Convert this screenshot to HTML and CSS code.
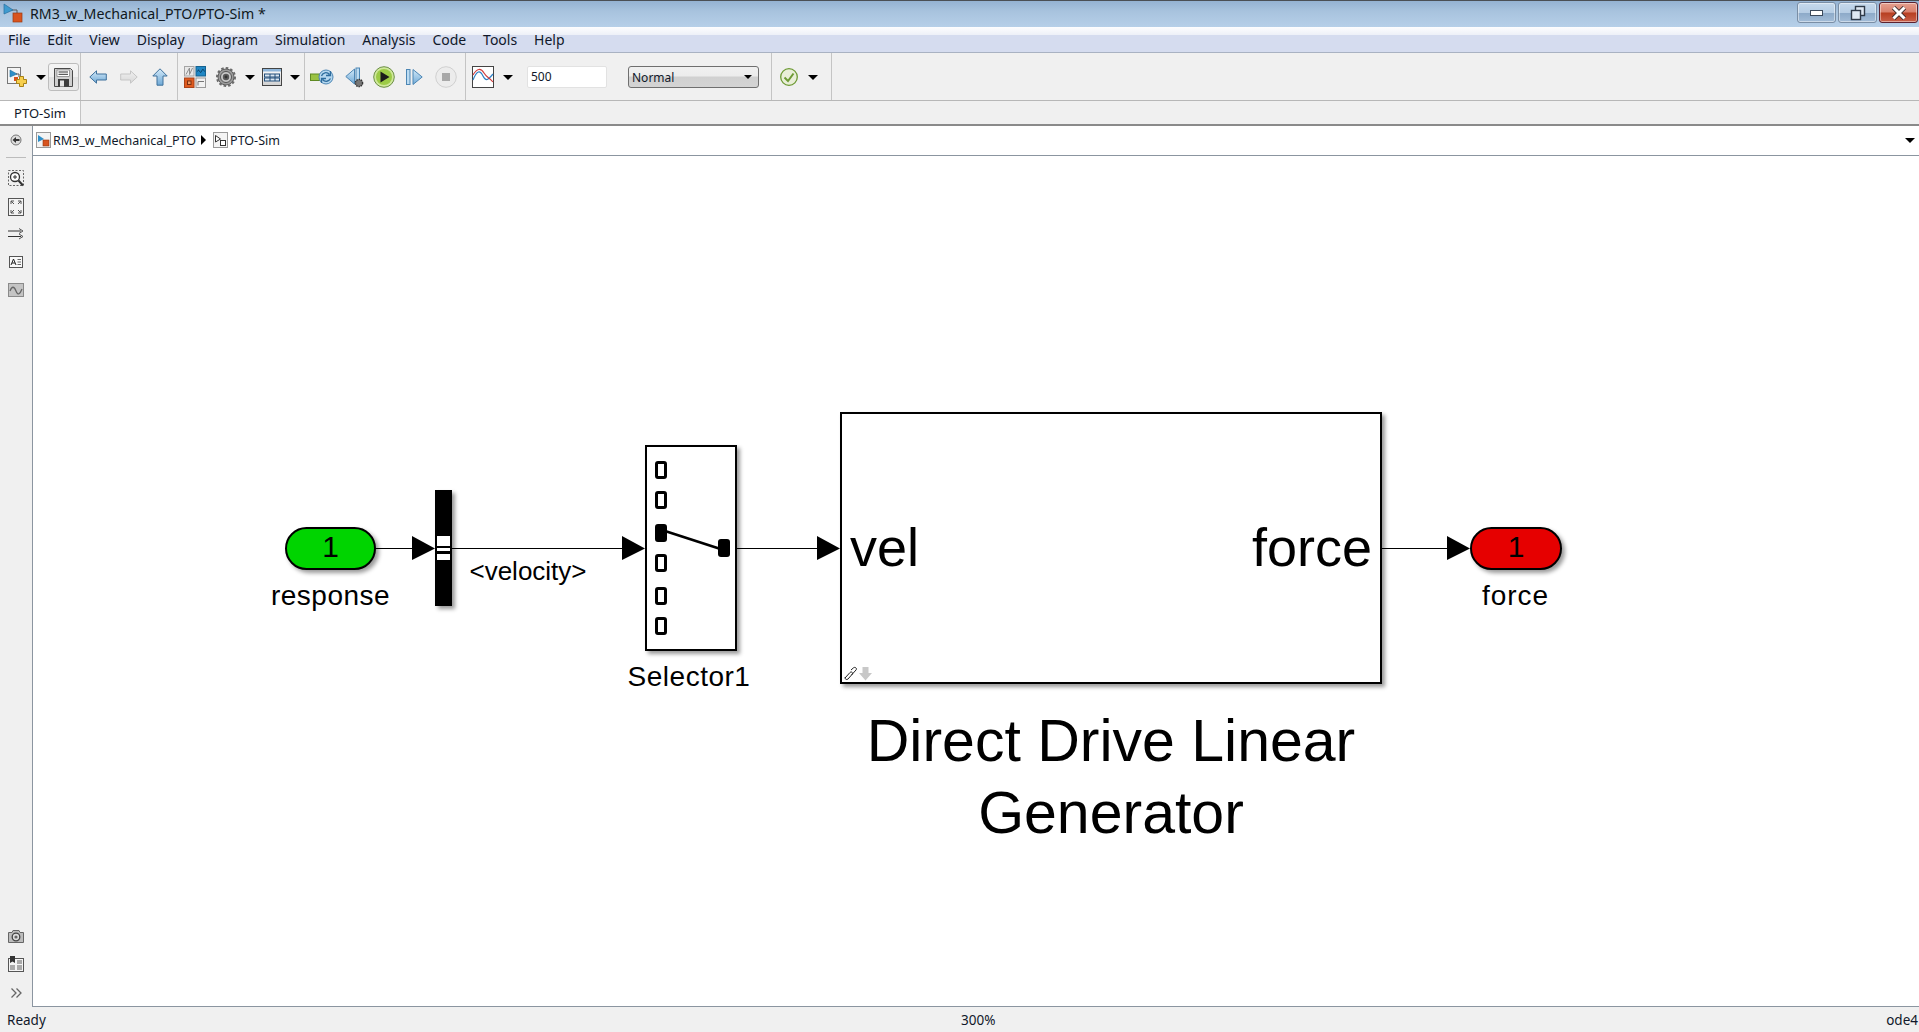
FILE: index.html
```html
<!DOCTYPE html>
<html lang="en">
<head>
    <meta charset="UTF-8">
    <title>RM3_w_Mechanical_PTO/PTO-Sim *</title>
    <link rel="stylesheet" href="styles.css">
</head>
<body>

<div class="titlebar">
    <svg class="app-icon" width="20" height="20" viewBox="0 0 20 20">
        <path d="M7 7H14V12" fill="none" stroke="#555" stroke-width="1"/>
        <path d="M1 1L10 7L1 11Z" fill="#3f9bd0" stroke="#2a6f9e" stroke-width=".7"/>
        <rect x="10" y="10" width="9" height="9" fill="#d9541e" stroke="#9a3a12" stroke-width=".7"/>
    </svg>
    <span class="title-text">RM3_w_Mechanical_PTO/PTO-Sim *</span>
    <div class="win-buttons">
        <div class="win-btn">
            <svg width="14" height="8" viewBox="0 0 14 8"><rect x=".5" y="1.500" width="12" height="5" fill="#fff" stroke="#3c4a5c"/></svg>
        </div>
        <div class="win-btn">
            <svg width="16" height="16" viewBox="0 0 16 16"><rect x="5.500" y="1.500" width="9" height="9" fill="#dfe8f2" stroke="#2f3a48" stroke-width="1.400"/><rect x="1.500" y="5.500" width="9" height="9" fill="#dfe8f2" stroke="#2f3a48" stroke-width="1.400"/></svg>
        </div>
        <div class="win-btn win-close">
            <svg width="16" height="14" viewBox="0 0 16 14"><path d="M2.500 1.500L13.500 12.500M13.500 1.500L2.500 12.500" stroke="#3a2a2a" stroke-width="4.600"/><path d="M2.500 1.500L13.500 12.500M13.500 1.500L2.500 12.500" stroke="#fff" stroke-width="3"/></svg>
        </div>
    </div>
</div>

<div class="menubar">
    <span>File</span>
    <span>Edit</span>
    <span>View</span>
    <span>Display</span>
    <span>Diagram</span>
    <span>Simulation</span>
    <span>Analysis</span>
    <span>Code</span>
    <span>Tools</span>
    <span>Help</span>
</div>

<div class="toolbar">
    <svg class="defs" width="0" height="0">
        <defs>
            <linearGradient id="blueArrow" x1="0" y1="0" x2="0" y2="1">
                <stop offset="0" stop-color="#d3e9f8"/>
                <stop offset="1" stop-color="#6fa9d6"/>
            </linearGradient>
            <linearGradient id="greyArrow" x1="0" y1="0" x2="0" y2="1">
                <stop offset="0" stop-color="#f0f0f0"/>
                <stop offset="1" stop-color="#d8d8d8"/>
            </linearGradient>
            <linearGradient id="tableFill" x1="0" y1="0" x2="0" y2="1">
                <stop offset="0" stop-color="#fff"/>
                <stop offset="1" stop-color="#cfcfcf"/>
            </linearGradient>
        </defs>
    </svg>
    <div class="tool-group group-file">
        <svg width="20" height="20" viewBox="0 0 20 20">
            <rect x=".5" y=".5" width="13" height="16" fill="#f4f4f4" stroke="#777"/>
            <path d="M3 3L10 7L3 10Z" fill="#2f8fc8" stroke="#1f6e9f" stroke-width=".6"/>
            <path d="M9 7H12V10" fill="none" stroke="#555"/>
            <rect x="7" y="10" width="4" height="4" fill="#d9541e"/>
            <path d="M12.500 9.500H16.500V12.500H19.500V16.500H16.500V19.500H12.500V16.500H9.500V12.500H12.500Z" fill="#f7cf4d" stroke="#a98216"/>
        </svg>
        <i class="caret caret-file"></i>
        <div class="save-btn">
            <svg width="19" height="19" viewBox="0 0 19 19">
                <path d="M.5 .5H16.500L18.500 2.500V18.500H.5Z" fill="#cfcfcf" stroke="#4a4a4a"/>
                <rect x="3" y="2" width="12.500" height="6.500" fill="#fff" stroke="#666" stroke-width=".6"/>
                <path d="M4.500 4H14M4.500 6.300H14" stroke="#333"/>
                <rect x="4" y="11" width="11" height="7.500" fill="#3c3c3c"/>
                <rect x="6" y="12.500" width="4" height="6" fill="#e4e4e4"/>
            </svg>
        </div>
    </div>
    <div class="tool-group group-nav">
        <svg width="18" height="14" viewBox="0 0 18 14"><path d="M.8 7L7.500 .8V4H17.300V10H7.500V13.200Z" fill="url(#blueArrow)" stroke="#3f719c"/></svg>
        <svg width="18" height="14" viewBox="0 0 18 14"><path d="M17.200 7L10.500 .8V4H.7V10H10.500V13.200Z" fill="url(#greyArrow)" stroke="#c6c6c6"/></svg>
        <svg class="nav-up" width="16" height="18" viewBox="0 0 16 18"><path d="M8 .8L15.200 8H11V17.200H5V8H.8Z" fill="url(#blueArrow)" stroke="#3f719c"/></svg>
    </div>
    <div class="tool-group group-model">
        <svg width="22" height="22" viewBox="0 0 22 22">
            <rect x=".5" y=".5" width="9.500" height="9.500" fill="#e8e8e8" stroke="#a5a5a5"/>
            <path d="M2 8.500L5.500 2V8.500L8.500 2" stroke="#8d8d8d" fill="none"/>
            <rect x="12" y=".5" width="9.500" height="9.500" fill="#1f86c4" stroke="#16628f"/>
            <path d="M13.500 5.500C15 1 16 9 17.500 5.500S19 3 20.500 5.500" stroke="#0b3a5c" fill="none"/>
            <rect x=".5" y="12" width="9.500" height="9.500" fill="#df5b1f" stroke="#a9431a"/>
            <rect x="3.500" y="15" width="3.500" height="3.500" fill="#ee9a63" stroke="#7a2f10"/>
            <rect x="12" y="12" width="9.500" height="9.500" fill="#f2f2f2" stroke="#9a9a9a"/>
            <path d="M14 19.500V15.500H20" stroke="#777" fill="none"/>
        </svg>
        <svg class="gear" width="20" height="20" viewBox="0 0 20 20">
            <circle cx="10" cy="10" r="8" fill="#9b9b9b" stroke="#5d5d5d"/>
            <circle cx="10" cy="10" r="9" fill="none" stroke="#6a6a6a" stroke-width="2" stroke-dasharray="2.600 2.050"/>
            <circle cx="10" cy="10" r="5.500" fill="#c8c8c8" stroke="#555"/>
            <circle cx="10" cy="10" r="3.200" fill="#5a5a5a"/>
            <circle cx="10" cy="10" r="1.400" fill="#333"/>
        </svg>
        <i class="caret caret-gear"></i>
        <svg width="20" height="18" viewBox="0 0 20 18">
            <rect x=".5" y=".5" width="19" height="17" fill="url(#tableFill)" stroke="#444"/>
            <rect x="1" y="1" width="18" height="2.500" fill="#8fb6da"/>
            <rect x="2.500" y="6" width="15" height="3" fill="#d9e5f0" stroke="#24507c"/>
            <rect x="2.500" y="10" width="15" height="3" fill="#d9e5f0" stroke="#24507c"/>
            <path d="M8 6V13M13 6V13" stroke="#24507c"/>
        </svg>
        <i class="caret caret-config"></i>
    </div>
    <div class="tool-group group-run">
        <svg width="25" height="18" viewBox="0 0 25 18">
            <rect x=".5" y="6" width="9" height="6.500" fill="#9ac243" stroke="#5f8a22"/>
            <circle cx="16" cy="9" r="7" fill="#b5d7ef" stroke="#4c86b4"/>
            <path d="M11.500 8C12.500 4.500 17 3.500 19.500 6.500M20.500 3V7.500H16M20.500 10.500C19 13.500 15 14.500 12.500 11.500M11.500 15V10.500H16" fill="none" stroke="#2e6d9e" stroke-width="1.300"/>
        </svg>
        <svg width="19" height="22" viewBox="0 0 19 22">
            <path d="M9.500 3L.8 10.500L9.500 18Z" fill="url(#blueArrow)" stroke="#4c86b4"/>
            <rect x="11" y="2" width="3.500" height="14" fill="#bcdcf2" stroke="#4c86b4"/>
            <circle cx="14" cy="17" r="3.600" fill="#777" stroke="#333" stroke-width="1.400" stroke-dasharray="1.500 .8"/>
        </svg>
        <svg class="play" width="22" height="22" viewBox="0 0 22 22">
            <circle cx="11" cy="11" r="10.300" fill="#cfe89a" stroke="#6c8f47"/>
            <circle cx="11" cy="11" r="8" fill="#9ccb46"/>
            <path d="M7.500 5.500L16.500 11L7.500 16.500Z" fill="#1b1b1b"/>
        </svg>
        <svg class="step" width="17" height="18" viewBox="0 0 17 18">
            <rect x=".5" y="1.500" width="3.500" height="15" fill="#bcdcf2" stroke="#4c86b4"/>
            <path d="M7 1.500L16.200 9L7 16.500Z" fill="url(#blueArrow)" stroke="#4c86b4"/>
        </svg>
        <svg class="stop" width="22" height="22" viewBox="0 0 22 22">
            <circle cx="11" cy="11" r="10.300" fill="#ececec" stroke="#d0d0d0"/>
            <rect x="7" y="7" width="8" height="8" fill="#a8a8a8"/>
        </svg>
    </div>
    <div class="tool-group group-sim">
        <svg width="22" height="22" viewBox="0 0 22 22">
            <rect x=".5" y=".5" width="21" height="21" fill="#fff" stroke="#444"/>
            <path d="M1 14C5 4 8 4 11 10S16 14 21 8" fill="none" stroke="#2f7fc4" stroke-width="1.200"/>
            <path d="M1 9C5 2 9 2 12 7S17 11 21 16" fill="none" stroke="#d13b3b" stroke-width="1.200"/>
        </svg>
        <i class="caret caret-scope"></i>
        <div class="stop-time">500</div>
        <div class="mode-select">Normal<i class="caret caret-mode"></i></div>
    </div>
    <div class="tool-group group-check">
        <svg width="18" height="18" viewBox="0 0 18 18">
            <circle cx="9" cy="9" r="8.300" fill="#e9eed8" stroke="#6d9a34" stroke-width="1.300"/>
            <path d="M4.500 9.500L8 13L13.500 5.500" fill="none" stroke="#6d9a34" stroke-width="2"/>
        </svg>
        <i class="caret caret-check"></i>
    </div>
</div>

<div class="tabbar">
    <div class="tab">PTO-Sim</div>
</div>

<div class="workspace">
    <div class="sidebar">
        <svg class="side-back" width="12" height="12" viewBox="0 0 12 12">
            <circle cx="6" cy="6" r="5" fill="#ddd" stroke="#777"/>
            <path d="M2.500 6L6 3V5H9.500V7H6V9Z" fill="#333"/>
        </svg>
        <div class="side-sep"></div>
        <svg class="side-zoom" width="16" height="17" viewBox="0 0 16 17">
            <rect x=".5" y=".5" width="15" height="15" fill="none" stroke="#666" stroke-dasharray="2 1.500"/>
            <circle cx="7" cy="7" r="4.500" fill="#fff" stroke="#333" stroke-width="1.300"/>
            <path d="M5 7H9M7 5V9" stroke="#333"/>
            <path d="M10.500 10.500L15 15.500" stroke="#333" stroke-width="2"/>
        </svg>
        <svg class="side-fit" width="16" height="18" viewBox="0 0 16 18">
            <rect x=".5" y=".5" width="15" height="17" fill="#f3f3f3" stroke="#555"/>
            <path d="M3 6V3H6M10 3H13V6M13 12V15H10M6 15H3V12M3 3L6 6M13 3L10 6M13 15L10 12M3 15L6 12" fill="none" stroke="#555"/>
        </svg>
        <svg class="side-arrows" width="16" height="12" viewBox="0 0 16 12">
            <path d="M0 3H13M0 8.500H13" stroke="#333"/>
            <path d="M11 .5L15 3L11 5.500M11 6L15 8.500L11 11" fill="none" stroke="#555"/>
        </svg>
        <svg class="side-note" width="14" height="12" viewBox="0 0 14 12">
            <rect x=".5" y=".5" width="13" height="11" fill="#fafafa" stroke="#555"/>
            <path d="M2 9L4.500 3L7 9M3 7H6" fill="none" stroke="#222"/>
            <path d="M8.500 3.500H12M8.500 6H12M8.500 8.500H12" stroke="#666"/>
        </svg>
        <svg class="side-image" width="16" height="14" viewBox="0 0 16 14">
            <rect x=".5" y=".5" width="15" height="13" fill="#c4c4c4" stroke="#8a8a8a"/>
            <path d="M2 8C4 3 6 3 8 8S12 11 14 6" fill="none" stroke="#666" stroke-width="1.300"/>
        </svg>
        <svg class="side-camera" width="16" height="14" viewBox="0 0 16 14">
            <path d="M.5 3.500H4L5 1.500H11L12 3.500H15.500V13.500H.5Z" fill="#bcbcbc" stroke="#666"/>
            <circle cx="8" cy="8" r="3.800" fill="#ddd" stroke="#444" stroke-width="1.300"/>
            <circle cx="8" cy="8" r="1.600" fill="#666"/>
        </svg>
        <svg class="side-grid" width="16" height="16" viewBox="0 0 16 16">
            <rect x=".5" y="2.500" width="15" height="13" fill="#f4f4f4" stroke="#555"/>
            <rect x="2" y="9" width="5" height="5" fill="#aaa"/>
            <rect x="9" y="4" width="5" height="4" fill="#aaa"/>
            <rect x="9" y="9" width="5" height="5" fill="#aaa"/>
            <path d="M2 0H7V7L4.500 5.500L2 7Z" fill="#333"/>
        </svg>
        <svg class="side-more" width="11" height="10" viewBox="0 0 11 10">
            <path d="M.5 .5L5 5L.5 9.500M5.500 .5L10 5L5.500 9.500" fill="none" stroke="#666" stroke-width="1.300"/>
        </svg>
    </div>
    <div class="main">
        <div class="addressbar">
            <div class="crumb-icon">
                <svg width="13" height="13" viewBox="0 0 13 13">
                    <path d="M1 1L7 5L1 8Z" fill="#2f8fc8"/>
                    <rect x="6" y="6" width="6" height="6" fill="#d9541e" stroke="#8e3611" stroke-width=".6"/>
                </svg>
            </div>
            <span class="crumb">RM3_w_Mechanical_PTO</span>
            <i class="crumb-arrow"></i>
            <div class="crumb-icon">
                <svg width="13" height="13" viewBox="0 0 13 13">
                    <path d="M1.500 1.500L6.500 5L1.500 8Z" fill="#fff" stroke="#333"/>
                    <rect x="6.500" y="6.500" width="5" height="5" fill="#fff" stroke="#333"/>
                </svg>
            </div>
            <span class="crumb">PTO-Sim</span>
            <i class="caret caret-address"></i>
        </div>
        <div class="canvas">
            <svg class="wires" width="1886" height="850" viewBox="0 0 1886 850">
                <path d="M343 392.500H379M419 392.500H589M704 392.500H784M1348 392.500H1414" stroke="#000" stroke-width="1"/>
                <path d="M379 380L402 392.500L379 404ZM589 380L612 392.500L589 404ZM784 380L807 392.500L784 404ZM1414 380L1437 392.500L1414 404Z" fill="#000"/>
            </svg>

            <div class="port port-in">1</div>
            <div class="label label-response">response</div>

            <div class="mux">
                <div class="mux-slot mux-slot-a"></div>
                <div class="mux-slot mux-slot-b"></div>
                <div class="mux-slot mux-slot-c"></div>
            </div>
            <div class="label label-velocity">&lt;velocity&gt;</div>

            <div class="selector">
                <i class="sel-pin sel-pin-1"></i>
                <i class="sel-pin sel-pin-2"></i>
                <i class="sel-pin sel-pin-on"></i>
                <i class="sel-pin sel-pin-4"></i>
                <i class="sel-pin sel-pin-5"></i>
                <i class="sel-pin sel-pin-6"></i>
                <i class="sel-out"></i>
                <svg class="sel-arm" width="92" height="206" viewBox="0 0 92 206">
                    <path d="M20 86L74 103.500" stroke="#000" stroke-width="2.600"/>
                </svg>
            </div>
            <div class="label label-selector">Selector1</div>

            <div class="subsystem">
                <span class="sub-port">vel</span>
                <span class="sub-port">force</span>
                <svg class="sub-badge" width="30" height="16" viewBox="0 0 30 16">
                    <path d="M2 12L7 6.500C8.500 5 10.500 7 9 8.500L5 13C3.500 14.500 1 12.500 2.500 11M8 4L10.500 1.800C12 .5 14.500 2.500 13 4L8.500 9" fill="none" stroke="#222" stroke-width="1"/>
                    <path d="M19.500 1H25.500V7H29L22.500 14.500L16 7H19.500Z" fill="#c8c8c8"/>
                </svg>
            </div>
            <div class="label label-generator">Direct Drive Linear<br>Generator</div>

            <div class="port port-out">1</div>
            <div class="label label-force">force</div>
        </div>
    </div>
</div>

<div class="statusbar">
    <span>Ready</span>
    <span>300%</span>
    <span class="status-right">ode4</span>
</div>

</body>
</html>
```

FILE: styles.css
```css
* {
    box-sizing: border-box;
}

html, body {
    margin: 0;
    height: 100%;
    overflow: hidden;
}

body {
    display: flex;
    flex-direction: column;
    width: 1919px;
    height: 1032px;
    background-color: #f0f0f0;
    font-family: "Noto Sans", "Open Sans", sans-serif;
    font-size: 13px;
    color: #10182a;
}

svg {
    display: block;
    flex: none;
}

.defs {
    position: absolute;
}

/* Title bar */
.titlebar {
    display: flex;
    align-items: center;
    flex: none;
    height: 27px;
    padding-bottom: 2px;
    border-top: 1px solid #4a4f55;
    background: linear-gradient(to bottom, #94b2d2, #a8c3de 40%, #b6cfe8);
}

.app-icon {
    margin-left: 3px;
}

.title-text {
    margin-left: 7px;
    font-size: 14.2px;
    color: #101820;
}

.win-buttons {
    display: flex;
    gap: 2px;
    margin-left: auto;
    margin-right: 1px;
    align-self: flex-start;
    margin-top: 1px;
}

.win-btn {
    display: flex;
    align-items: center;
    justify-content: center;
    width: 39px;
    height: 21px;
    border: 1px solid #7a8ea5;
    border-radius: 3px;
    background: linear-gradient(to bottom, #c6d9ec 0, #b6cde4 50%, #8ca9c8 52%, #a3bdd8 100%);
    box-shadow: inset 0 0 0 1px rgba(255, 255, 255, .45);
}

.win-close {
    border-color: #5c2230;
    background: linear-gradient(to bottom, #e6a08f 0, #d8806c 48%, #b73e20 52%, #c9604a 100%);
}

/* Menu */
.menubar {
    display: flex;
    align-items: center;
    gap: 16.9px;
    flex: none;
    height: 26px;
    padding-left: 8px;
    border-bottom: 1px solid #a9b2c2;
    background: linear-gradient(to bottom, #fdfdfe 0, #eef1f8 30%, #d5dcef 34%, #d5dcef 100%);
    font-size: 14px;
}

/* Toolbar */
.toolbar {
    display: flex;
    flex: none;
    height: 48px;
    border-bottom: 1px solid #b7b7b7;
    background-color: #f0f0f0;
}

.tool-group {
    display: flex;
    align-items: center;
    flex: none;
    padding-top: 1px;
    border-right: 1px solid #c4c4c4;
}

.group-file { width: 81px; padding-left: 7px; }
.group-nav { width: 97px; padding-left: 8px; gap: 13px; }
.group-model { width: 127px; padding-left: 6px; }
.group-run { width: 161px; padding-left: 5px; gap: 10px; }
.group-sim { width: 306px; padding-left: 6px; }
.group-check { width: 60px; padding-left: 8px; }

.nav-up { margin-left: 1px; }
.gear { margin-left: 10px; }
.play { margin-left: -1px; }
.step { margin-left: 1px; }
.stop { margin-left: 2px; }

.caret {
    display: block;
    flex: none;
    width: 0;
    height: 0;
    border-left: 5px solid transparent;
    border-right: 5px solid transparent;
    border-top: 5px solid #000;
}

.caret-file { margin-left: 9px; }
.caret-gear { margin: 0 7px 0 9px; }
.caret-config { margin-left: 8px; }
.caret-scope { margin-left: 9px; }
.caret-check { margin-left: 10px; }
.caret-mode { margin-left: auto; margin-right: 1px; border-left-width: 4px; border-right-width: 4px; border-top-width: 4px; }

.caret-address {
    margin-left: auto;
    margin-right: 4px;
}

.save-btn {
    display: flex;
    align-items: center;
    justify-content: center;
    width: 31px;
    height: 28px;
    margin-left: 2px;
    border: 1px solid #bdbdbd;
    border-radius: 3px;
    background: linear-gradient(to bottom, #f4f4f4 0, #f0f0f0 50%, #e2e2e2 52%, #e8e8e8 100%);
}

.stop-time {
    width: 80px;
    height: 22px;
    margin-left: 14px;
    padding-left: 3px;
    border: 1px solid #e2e2e2;
    border-radius: 2px;
    background-color: #fff;
    font-size: 12px;
    line-height: 20px;
}

.mode-select {
    display: flex;
    align-items: center;
    width: 131px;
    height: 22px;
    margin-left: 21px;
    padding: 0 5px 0 3px;
    border: 1px solid #6f6f6f;
    border-radius: 3px;
    background: linear-gradient(to bottom, #f0f0f0 0, #ececec 45%, #d0d0d0 50%, #d4d4d4 100%);
    font-size: 12px;
}

/* Tabs */
.tabbar {
    flex: none;
    height: 25px;
    background-color: #f0f0f0;
    border-bottom: 2px solid #8a8a8a;
}

.tab {
    width: 81px;
    height: 23px;
    border-right: 1px solid #c4c4c4;
    background-color: #fff;
    font-size: 13px;
    line-height: 25px;
    text-align: center;
}

/* Workspace */
.workspace {
    display: flex;
    flex: 1;
    min-height: 0;
}

.sidebar {
    display: flex;
    flex-direction: column;
    align-items: center;
    flex: none;
    width: 33px;
    padding-bottom: 9px;
    border-right: 1px solid #8b95a0;
}

.side-back { margin-top: 8px; }
.side-sep { width: 20px; height: 1px; margin-top: 11px; background-color: #bcbcbc; }
.side-zoom { margin-top: 12px; }
.side-fit { margin-top: 11px; }
.side-arrows { margin-top: 12px; }
.side-note { margin-top: 16px; }
.side-image { margin-top: 15px; }
.side-camera { margin-top: auto; }
.side-grid { margin-top: 13px; }
.side-more { margin-top: 16px; }

.main {
    display: flex;
    flex-direction: column;
    flex: 1;
    min-width: 0;
    border-bottom: 1px solid #8b95a0;
}

.addressbar {
    display: flex;
    align-items: center;
    flex: none;
    height: 30px;
    padding-left: 3px;
    padding-bottom: 1px;
    border-bottom: 1px solid #8b95a0;
    background-color: #fff;
}

.crumb-icon {
    display: flex;
    align-items: center;
    justify-content: center;
    width: 15px;
    height: 16px;
    border: 1px solid #9a9a9a;
    background-color: #f4f4f4;
}

.crumb {
    margin-left: 2px;
    font-size: 12.5px;
}

.crumb-arrow {
    display: block;
    width: 0;
    height: 0;
    margin: 0 7px 0 5px;
    border-top: 5px solid transparent;
    border-bottom: 5px solid transparent;
    border-left: 5px solid #000;
}

/* Diagram */
.canvas {
    position: relative;
    flex: 1;
    background-color: #fff;
    font-family: "Liberation Sans", Arial, sans-serif;
    color: #000;
}

.wires {
    position: absolute;
    left: 0;
    top: 0;
}

.label {
    position: absolute;
    text-align: center;
    white-space: nowrap;
    transform: translateX(-50%);
    font-size: 28px;
    line-height: 32px;
    letter-spacing: .5px;
}

.label-response { left: 297.500px; top: 424px; }
.label-velocity { left: 495px; top: 400px; font-size: 26px; line-height: 30px; letter-spacing: 0; }
.label-selector { left: 656px; top: 505px; }
.label-force { left: 1482.500px; top: 424px; letter-spacing: 1px; }

.label-generator {
    left: 1078px;
    top: 549px;
    font-size: 59px;
    line-height: 72px;
    letter-spacing: 0;
}

.port {
    position: absolute;
    top: 371px;
    width: 91px;
    height: 43px;
    border: 2px solid #000;
    border-radius: 22px;
    box-shadow: 3px 3px 4px rgba(0, 0, 0, .4);
    font-size: 30px;
    line-height: 36px;
    text-align: center;
}

.port-in { left: 252px; background-color: #00d400; }
.port-out { left: 1437px; width: 92px; background-color: #e60000; }

.mux {
    position: absolute;
    left: 402px;
    top: 334px;
    width: 17px;
    height: 116px;
    background-color: #000;
    box-shadow: 3px 3px 4px rgba(0, 0, 0, .4);
}

.mux-slot {
    position: absolute;
    left: 2px;
    width: 13px;
    background-color: #fff;
}

.mux-slot-a { top: 46px; height: 10px; }
.mux-slot-b { top: 58px; height: 3px; }
.mux-slot-c { top: 64px; height: 6px; }

.selector {
    position: absolute;
    left: 612px;
    top: 289px;
    width: 92px;
    height: 206px;
    border: 2px solid #000;
    background-color: #fff;
    box-shadow: 3px 3px 4px rgba(0, 0, 0, .4);
}

.sel-arm {
    position: absolute;
    left: -2px;
    top: -2px;
}

.sel-pin {
    position: absolute;
    left: 8px;
    width: 12px;
    height: 18px;
    border: 3px solid #000;
    border-radius: 3px;
    background-color: #fff;
}

.sel-pin-1 { top: 14px; }
.sel-pin-2 { top: 44px; }
.sel-pin-on { top: 77px; background-color: #000; }
.sel-pin-4 { top: 107px; }
.sel-pin-5 { top: 140px; }
.sel-pin-6 { top: 170px; }

.sel-out {
    position: absolute;
    left: 71px;
    top: 92px;
    width: 12px;
    height: 18px;
    border-radius: 3px;
    background-color: #000;
}

.subsystem {
    position: absolute;
    left: 807px;
    top: 256px;
    display: flex;
    align-items: center;
    justify-content: space-between;
    width: 542px;
    height: 272px;
    padding: 0 8px 2px;
    border: 2px solid #000;
    background-color: #fff;
    box-shadow: 3px 3px 4px rgba(0, 0, 0, .4);
    font-size: 54px;
}

.sub-badge {
    position: absolute;
    left: 1px;
    bottom: 0;
}

/* Status bar */
.statusbar {
    display: grid;
    grid-template-columns: 954px auto 1fr;
    align-items: center;
    flex: none;
    height: 25px;
    padding-left: 7px;
    padding-right: 1px;
    font-size: 13.5px;
}

.status-right {
    text-align: right;
}
```
